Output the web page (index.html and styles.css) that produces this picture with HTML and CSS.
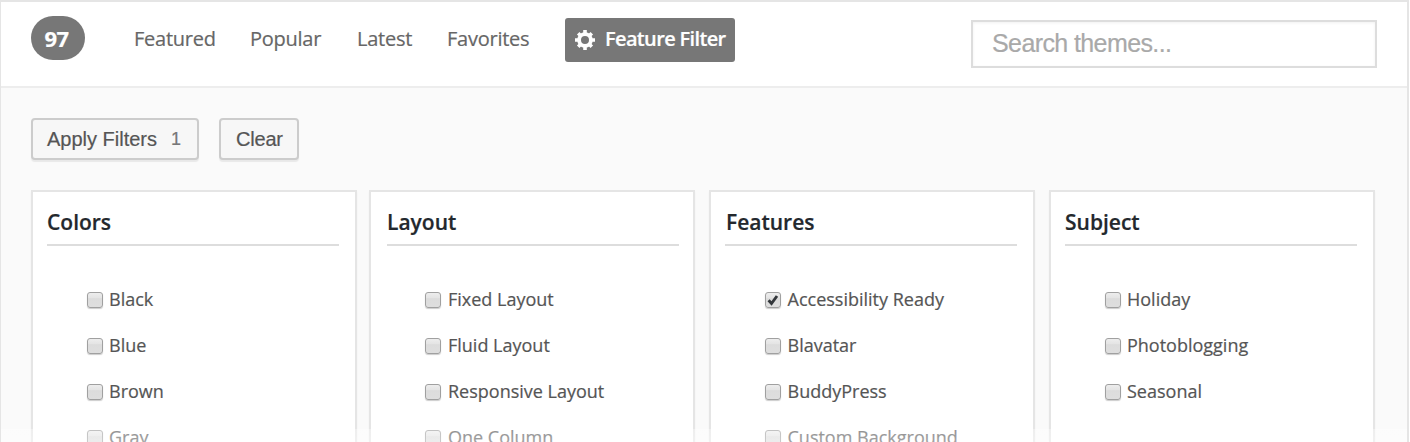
FILE: index.html
```html
<!DOCTYPE html>
<html lang="en">
<head>
<meta charset="utf-8">
<title>Themes</title>
<link rel="stylesheet" href="styles.css">
</head>
<body>
<div class="browser">
  <header class="topbar">
    <span class="count">97</span>
    <nav class="nav">
      <a class="nav-link featured">Featured</a>
      <a class="nav-link popular">Popular</a>
      <a class="nav-link latest">Latest</a>
      <a class="nav-link favorites">Favorites</a>
    </nav>
    <a class="filter-toggle">
      <svg class="gear" viewBox="-10 -10 20 20" fill="none" stroke="#fff"><circle r="5.900" stroke-width="3.800"/><path stroke-width="3.600" d="M0-10v3M0 7v3M-10 0h3M7 0h3M-6.800-6.800l2 2M4.800 4.800l2 2M-6.800 6.800l2-2M4.800-4.800l2-2"/></svg>
      <span class="filter-label">Feature Filter</span>
    </a>
    <div class="search">Search themes...</div>
  </header>
  <main class="drawer">
    <div class="buttons">
      <a class="button apply"><span>Apply Filters</span><span class="badge">1</span></a>
      <a class="button clear"><span>Clear</span></a>
    </div>
    <div class="groups">
      <section class="group colors">
        <h4 class="title">Colors</h4>
        <ul class="options">
          <li class="option"><i class="box"></i><span>Black</span></li>
          <li class="option"><i class="box"></i><span>Blue</span></li>
          <li class="option"><i class="box"></i><span>Brown</span></li>
          <li class="option"><i class="box"></i><span>Gray</span></li>
        </ul>
      </section>
      <section class="group layout">
        <h4 class="title">Layout</h4>
        <ul class="options">
          <li class="option"><i class="box"></i><span>Fixed Layout</span></li>
          <li class="option"><i class="box"></i><span>Fluid Layout</span></li>
          <li class="option"><i class="box"></i><span>Responsive Layout</span></li>
          <li class="option"><i class="box"></i><span>One Column</span></li>
        </ul>
      </section>
      <section class="group features">
        <h4 class="title">Features</h4>
        <ul class="options">
          <li class="option"><i class="box"><svg class="tick" viewBox="0 0 14 14"><path d="M2.600 7.300l2.900 3.200 5.500-7.500" fill="none" stroke="#33373b" stroke-width="2.900"/></svg></i><span>Accessibility Ready</span></li>
          <li class="option"><i class="box"></i><span>Blavatar</span></li>
          <li class="option"><i class="box"></i><span>BuddyPress</span></li>
          <li class="option"><i class="box"></i><span>Custom Background</span></li>
        </ul>
      </section>
      <section class="group subject">
        <h4 class="title">Subject</h4>
        <ul class="options">
          <li class="option"><i class="box"></i><span>Holiday</span></li>
          <li class="option"><i class="box"></i><span>Photoblogging</span></li>
          <li class="option"><i class="box"></i><span>Seasonal</span></li>
        </ul>
      </section>
    </div>
  </main>
  <div class="fade"></div>
</div>
</body>
</html>
```
FILE: styles.css
```css
* { box-sizing: border-box; }
body {
  margin: 0;
  background: #fff;
  font-family: "Open Sans", sans-serif;
  -webkit-text-stroke: 0.2px currentColor;
}
.browser {
  position: relative;
  width: 1409px;
  height: 442px;
  overflow: hidden;
  border: solid #e5e5e5;
  border-width: 2px 2px 0 1px;
}
.topbar {
  display: flex;
  align-items: flex-start;
  height: 86px;
  padding-left: 30px;
  border-bottom: 2px solid #ededed;
  font-size: 20px;
  line-height: 30px;
  color: #666;
}
.count {
  width: 54px;
  height: 44px;
  margin-top: 14px;
  padding-right: 3px;
  border-radius: 22px;
  background: #777;
  color: #fff;
  font-weight: 700;
  font-size: 22px;
  letter-spacing: -0.6px;
  line-height: 44px;
  text-align: center;
}
.nav { display: flex; height: 30px; margin: 22px 0 0 49px; width: 431px; }
.nav-link { white-space: nowrap; letter-spacing: -0.25px; }
.featured { width: 116px; }
.popular { width: 107px; }
.latest { width: 90px; }
.filter-toggle {
  display: flex;
  width: 170px;
  height: 44px;
  margin-top: 16px;
  padding-left: 10px;
  border-radius: 3px;
  background: #777;
  color: #fff;
  font-weight: 600;
  letter-spacing: -0.65px;
  white-space: nowrap;
}
.gear { width: 20px; height: 20px; margin: 12px 10px 0 0; }
.filter-label { margin-top: 6px; }
.search {
  width: 406px;
  height: 48px;
  margin: 18px 0 0 236px;
  padding-left: 19px;
  border: 2px solid #ddd;
  box-shadow: inset 0 1px 3px rgba(0, 0, 0, .06);
  font: 25px/43px "Liberation Sans", sans-serif;
  letter-spacing: -0.6px;
  color: #a9a9a9;
}
.drawer { height: 354px; padding: 30px 0 0 30px; background: #fafafa; }
.buttons { display: flex; gap: 20px; }
.button {
  display: flex;
  height: 42px;
  padding-left: 14px;
  border: 2px solid #ccc;
  border-radius: 4px;
  background: #f7f7f7;
  box-shadow: 0 2px 1px rgba(0, 0, 0, .07);
  font: 20px/38px "Liberation Sans", sans-serif;
  color: #555;
}
.apply { width: 168px; }
.clear { width: 80px; padding-left: 15px; letter-spacing: -0.2px; }
.badge { margin-left: 14px; font-size: 18px; color: #777; }
.groups { display: flex; gap: 14px; margin-top: 30px; }
.group {
  width: 326px;
  height: 260px;
  padding: 14px 16px 0 14px;
  border: 2px solid #e5e5e5;
  background: #fff;
  box-shadow: 0 2px 2px rgba(0, 0, 0, .04);
}
.colors { margin-right: -2px; }
.layout { padding: 14px 14px 0 16px; }
.title {
  height: 40px;
  margin: 0;
  border-bottom: 2px solid #ddd;
  font-size: 21px;
  font-weight: 600;
  line-height: 32px;
  color: #23282d;
}
.features .title { text-indent: 1px; }
.options {
  display: flex;
  flex-direction: column;
  gap: 16px;
  margin: 38px 0 0;
  padding: 0 0 0 40px;
  list-style: none;
}
.layout .options { padding-left: 38px; }
.option {
  display: flex;
  align-items: flex-start;
  gap: 6px;
  height: 30px;
  font-size: 18px;
  line-height: 30px;
  white-space: nowrap;
  color: #555;
}
.layout .option { gap: 7px; }
.features .option { gap: 6.5px; }
.box {
  width: 16px;
  height: 16px;
  margin-top: 8px;
  border: 1px solid #a0a0a0;
  border-radius: 3px;
  background: linear-gradient(#ededed, #e4e4e4 35%, #dcdcdc 40%, #dedede);
  box-shadow: 0 1px 1px rgba(0, 0, 0, .2);
}
.tick { display: block; width: 14px; height: 14px; }
.fade {
  position: absolute;
  left: -1px;
  right: -2px;
  bottom: 0;
  height: 13px;
  background: linear-gradient(rgba(255, 255, 255, .35), rgba(255, 255, 255, .45));
}
```
